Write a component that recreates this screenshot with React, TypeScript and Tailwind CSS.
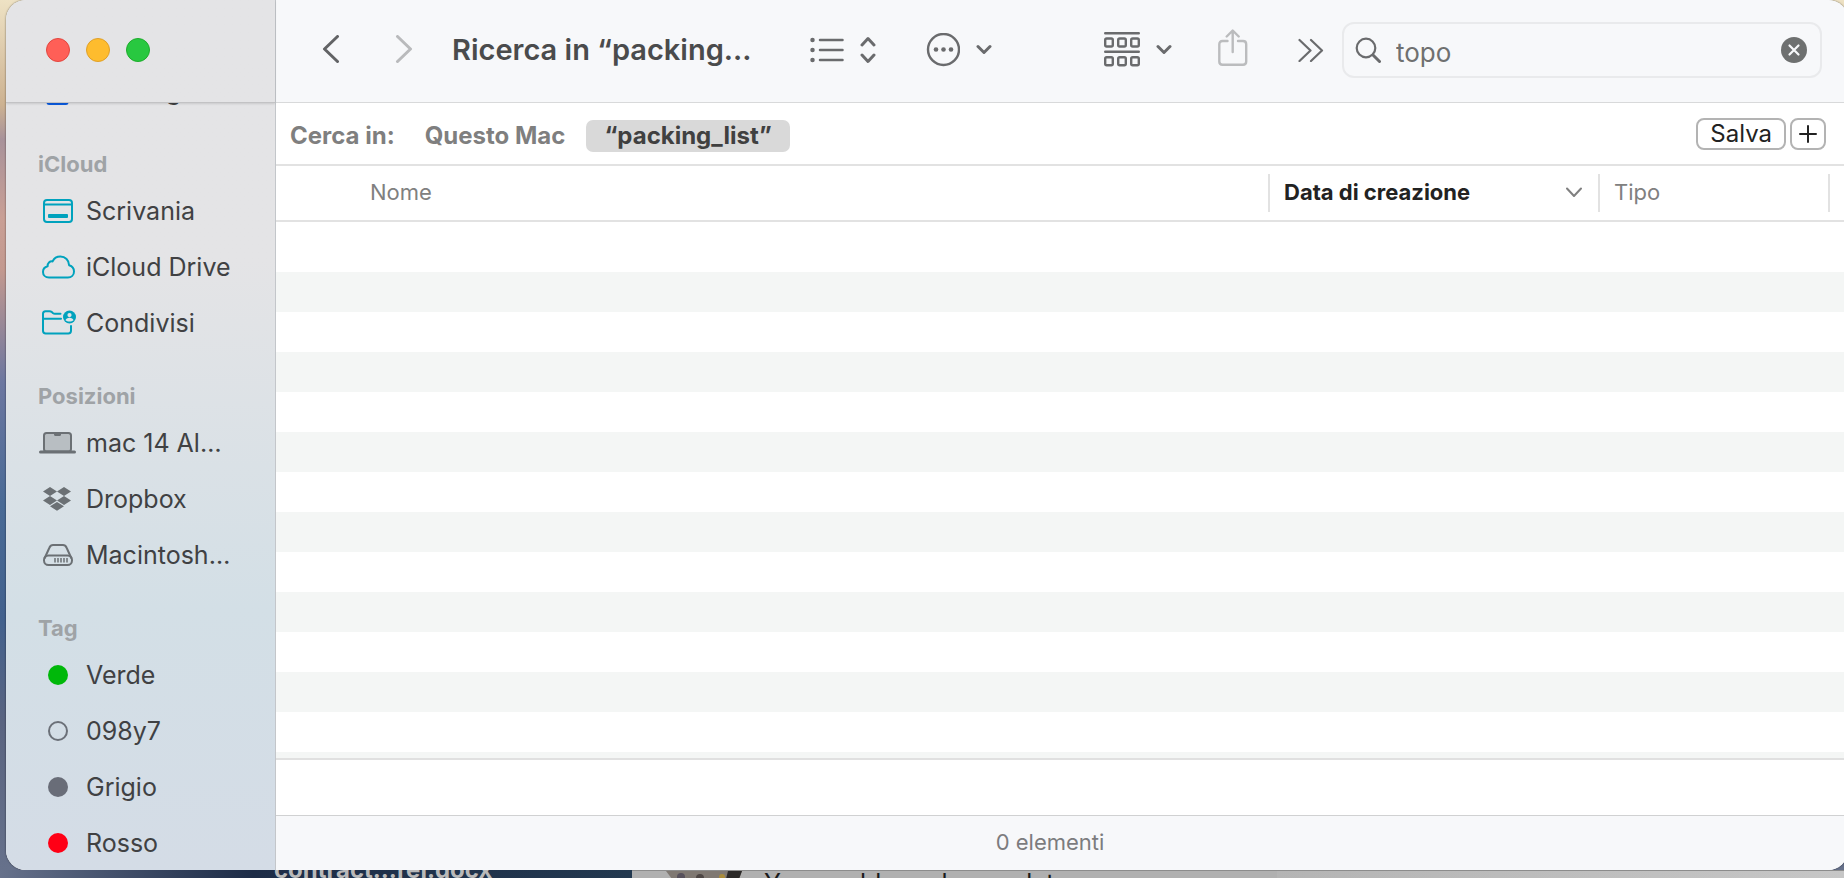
import type { ReactNode } from "react";

const DesktopIcon = () => (
  <svg width="30" height="24" viewBox="0 0 30 24" fill="none" stroke="#00a2bd" strokeWidth="2">
    <rect x="1" y="1" width="28" height="22" rx="3" />
    <path d="M1 5.500h28" />
    <rect x="5" y="15" width="20" height="4" rx="1" fill="#00a2bd" stroke="none" />
  </svg>
);

const CloudIcon = () => (
  <svg width="34" height="24" viewBox="0 0 34 24" fill="none" stroke="#00a2bd" strokeWidth="2" strokeLinejoin="round">
    <path d="M8 22.500C4.300 22.500 2 20 2 17c0-3 2-5.200 4.600-5.800C6.400 8.200 8.800 6 11.600 6.400 13 3.300 16 1.500 19.400 1.500c4.900 0 8.600 3.800 8.700 8.700 3 .9 4.900 3.200 4.900 6.200 0 3.500-2.600 6.100-6.100 6.100H8z" />
  </svg>
);

const SharedIcon = () => (
  <svg width="36" height="26" viewBox="0 0 36 26" fill="none" stroke="#00a2bd" strokeWidth="2" strokeLinecap="round" strokeLinejoin="round">
    <path d="M20.500 3.800h-5.500c-1 0-1.500-.3-2.200-.9l-1-.9c-.7-.6-1.300-.8-2.300-.8H5.500C3.800 1.200 3 2.200 3 3.800v17C3 22.500 4 23.500 5.700 23.500h22.600c1.700 0 2.700-1 2.700-2.700V16" />
    <path d="M3 8.800h18" />
    <circle cx="29.500" cy="7" r="6.500" fill="#00a2bd" stroke="none" />
    <circle cx="29.500" cy="5.100" r="2.100" fill="#e2e4e6" stroke="none" />
    <path d="M25.500 10.300c.4-1.800 2-2.600 4-2.600s3.600.8 4 2.600c-1 .8-2.400 1.200-4 1.200s-3-.4-4-1.200z" fill="#e2e4e6" stroke="none" />
  </svg>
);

const LaptopIcon = () => (
  <svg width="38" height="22" viewBox="0 0 38 22">
    <rect x="5" y="1" width="27" height="18.500" rx="2.500" fill="#b8bec2" stroke="#6b7074" strokeWidth="2" />
    <path d="M15 1h7v1.500c0 .8-.5 1.500-1.500 1.500h-4C15.500 4 15 3.300 15 2.500z" fill="#6b7074" />
    <rect x="0" y="18.500" width="37" height="3" rx="1.500" fill="#6b7074" />
  </svg>
);

const DropboxIcon = () => (
  <svg width="30" height="24" viewBox="0 0 30 24" fill="#6b7074">
    <path d="M7 0l7 4.500L7 9 0 4.500zM21 0l7 4.500L21 9l-7-4.500zM7 9l7 4.500L7 18l-7-4.500zM21 9l7 4.500-7 4.500-7-4.500zM14 15l7 4.300-7 4.500-7-4.500z" />
  </svg>
);

const DriveIcon = () => (
  <svg width="30" height="22" viewBox="0 0 30 22" fill="none" stroke="#6b7074" strokeWidth="2">
    <rect x="1" y="11.500" width="28" height="9.500" rx="4.500" />
    <path d="M1.500 14.500L6.500 3.500C7.200 1.800 8.200 1 10 1h10c1.800 0 2.800.8 3.500 2.500l5 11" />
    <path d="M12 14v4.500M15 14v4.500M18 14v4.500M21 14v4.500M24 14v4.500" strokeWidth="1.500" />
  </svg>
);

const CalendarIcon = () => (
  <svg width="24" height="28" viewBox="0 0 24 28" fill="none" stroke="#0a5be0" strokeWidth="3">
    <rect x="2" y="1.500" width="19" height="25" rx="1" />
  </svg>
);

const Dot = ({ className }: { className: string }) => <span className={`size-5 rounded-full ${className}`} />;

const ChevronDown = () => (
  <svg width="16" height="12" viewBox="0 0 16 12" fill="none" stroke="#6a6b6d" strokeWidth="3" strokeLinecap="round" strokeLinejoin="round">
    <path d="M2 2.500l6 6 6-6" />
  </svg>
);

const sections: { title: string; items: { label: string; icon: ReactNode }[] }[] = [
  {
    title: "iCloud",
    items: [
      { label: "Scrivania", icon: <DesktopIcon /> },
      { label: "iCloud Drive", icon: <CloudIcon /> },
      { label: "Condivisi", icon: <SharedIcon /> },
    ],
  },
  {
    title: "Posizioni",
    items: [
      { label: "mac 14 Al…", icon: <LaptopIcon /> },
      { label: "Dropbox", icon: <DropboxIcon /> },
      { label: "Macintosh…", icon: <DriveIcon /> },
    ],
  },
  {
    title: "Tag",
    items: [
      { label: "Verde", icon: <Dot className="bg-[#00b80a]" /> },
      { label: "098y7", icon: <Dot className="border-2 border-[#6b7078]" /> },
      { label: "Grigio", icon: <Dot className="bg-[#696d78]" /> },
      { label: "Rosso", icon: <Dot className="bg-[#ff0015]" /> },
    ],
  },
];

function SidebarItem({ label, icon }: { label: string; icon: ReactNode }) {
  return (
    <a href="#" className="flex h-14 items-center gap-1.5 pl-[30px] text-[25px] text-[#404143]">
      <span className="flex w-11 shrink-0 justify-center">{icon}</span>
      <span className="pt-0.5 whitespace-nowrap">{label}</span>
    </a>
  );
}

function Sidebar() {
  return (
    <aside className="flex w-[270px] shrink-0 flex-col border-r border-[#c3c6ca] bg-linear-to-b from-[#e4e4e6] from-30% via-[#d3dfe6] via-70% to-[#d4dce6]">
      <div className="z-10 flex h-[103px] shrink-0 items-center gap-4 border-b border-[#c2c2c4] pb-0.5 pl-10 shadow-[0_1px_2px_rgba(0,0,0,0.12)]">
        <button aria-label="Chiudi" className="size-6 rounded-full border border-[#e2463f] bg-[#ff5f57]" />
        <button aria-label="Riduci" className="size-6 rounded-full border border-[#e0a028] bg-[#febc2e]" />
        <button aria-label="Ingrandisci" className="size-6 rounded-full border border-[#1dad2b] bg-[#28c840]" />
      </div>
      <nav className="min-h-0 flex-1 overflow-hidden">
        <div className="-mt-10">
          <SidebarItem label="Training" icon={<CalendarIcon />} />
        </div>
        {sections.map((section) => (
          <section key={section.title}>
            <h2 className="flex h-16 items-end pb-0.5 pl-8 text-[22px] font-bold text-[#9fa3a6]">{section.title}</h2>
            {section.items.map((item) => (
              <SidebarItem key={item.label} {...item} />
            ))}
          </section>
        ))}
      </nav>
    </aside>
  );
}

function Toolbar() {
  return (
    <header className="flex h-[103px] shrink-0 items-center border-b border-[#d8d9da] bg-[#f7f8fa] pr-[26px] pb-0.5 pl-[45px]">
      <button aria-label="Indietro">
        <svg width="20" height="30" viewBox="0 0 20 30" fill="none" stroke="#626365" strokeWidth="3" strokeLinecap="round" strokeLinejoin="round">
          <path d="M16.500 1.500L3.500 14l13 12.500" />
        </svg>
      </button>
      <button aria-label="Avanti" className="ml-[53px]">
        <svg width="20" height="30" viewBox="0 0 20 30" fill="none" stroke="#b9babc" strokeWidth="3" strokeLinecap="round" strokeLinejoin="round">
          <path d="M3.500 1.500l13 12.500-13 12.500" />
        </svg>
      </button>
      <h1 className="ml-[38px] w-[358px] shrink-0 text-[29px] font-semibold whitespace-nowrap text-[#4a4b4c]">
        Ricerca in “packing…
      </h1>
      <button aria-label="Vista" className="flex items-center gap-4">
        <svg width="34" height="26" viewBox="0 0 34 26" fill="none" stroke="#6a6b6d" strokeWidth="2.500" strokeLinecap="round">
          <path d="M10 3h22.500M10 13h22.500M10 23h22.500" />
          <path d="M2.500 3h.01M2.500 13h.01M2.500 23h.01" strokeWidth="4.500" />
        </svg>
        <svg width="16" height="28" viewBox="0 0 16 28" fill="none" stroke="#6a6b6d" strokeWidth="3" strokeLinecap="round" strokeLinejoin="round">
          <path d="M2 9l6-6.500L14 9M2 19l6 6.500 6-6.500" />
        </svg>
      </button>
      <button aria-label="Azioni" className="ml-[50px] flex items-center gap-4">
        <svg width="34" height="34" viewBox="0 0 34 34">
          <circle cx="17.500" cy="16.500" r="15.500" fill="none" stroke="#6a6b6d" strokeWidth="2.400" />
          <g fill="#6a6b6d">
            <circle cx="10" cy="16.500" r="2.300" />
            <circle cx="17.500" cy="16.500" r="2.300" />
            <circle cx="25" cy="16.500" r="2.300" />
          </g>
        </svg>
        <ChevronDown />
      </button>
      <button aria-label="Raggruppa" className="ml-28 flex items-center gap-4">
        <svg width="36" height="36" viewBox="0 0 36 36" fill="none" stroke="#6a6b6d" strokeWidth="2.400" strokeLinecap="round">
          <path d="M1.200 1.200h33.600M1.200 19.800h33.600" />
          <rect x="1.200" y="6.500" width="7.600" height="8" rx="1.500" />
          <rect x="14.200" y="6.500" width="7.600" height="8" rx="1.500" />
          <rect x="27.200" y="6.500" width="7.600" height="8" rx="1.500" />
          <rect x="1.200" y="25.300" width="7.600" height="8" rx="1.500" />
          <rect x="14.200" y="25.300" width="7.600" height="8" rx="1.500" />
          <rect x="27.200" y="25.300" width="7.600" height="8" rx="1.500" />
        </svg>
        <ChevronDown />
      </button>
      <button aria-label="Condividi" className="ml-[45px] pb-1">
        <svg width="32" height="38" viewBox="0 0 32 38" fill="none" stroke="#bbbcbe" strokeWidth="2.400" strokeLinecap="round" strokeLinejoin="round">
          <path d="M10.500 12H5.500c-2 0-3.200 1.200-3.200 3.200v17.400c0 2 1.200 3.200 3.200 3.200h20.500c2 0 3.200-1.200 3.200-3.200V15.200c0-2-1.200-3.200-3.200-3.200h-5" />
          <path d="M15.700 23V2M9.700 7.500l6-6 6 6" />
        </svg>
      </button>
      <button aria-label="Altro" className="ml-[49px]">
        <svg width="26" height="24" viewBox="0 0 26 24" fill="none" stroke="#6a6b6d" strokeWidth="2.200" strokeLinecap="round" strokeLinejoin="round">
          <path d="M1.500 2l11 10.500-11 10.500M13 2l11 10.500-11 10.500" />
        </svg>
      </button>
      <div className="ml-[18px] flex h-14 min-w-0 flex-1 items-center rounded-xl border-2 border-[#e9eaec] pr-[13px] pl-[11px]">
        <svg className="shrink-0" width="26" height="26" viewBox="0 0 26 26" fill="none" stroke="#6a6b6d" strokeLinecap="round">
          <circle cx="11" cy="11" r="9.300" strokeWidth="2.200" />
          <path d="M18 18l6.500 6.500" strokeWidth="3" />
        </svg>
        <input
          aria-label="Cerca"
          defaultValue="topo"
          className="ml-[15px] min-w-0 flex-1 bg-transparent pt-1 text-[26px] text-[#6f7070] outline-none"
        />
        <button aria-label="Cancella">
          <svg width="26" height="26" viewBox="0 0 26 26">
            <circle cx="13" cy="13" r="13" fill="#6e7070" />
            <path d="M8.500 8.500l9 9M17.500 8.500l-9 9" stroke="#f7f8fa" strokeWidth="2.200" strokeLinecap="round" />
          </svg>
        </button>
      </div>
    </header>
  );
}

function ScopeBar() {
  return (
    <div className="flex h-[63px] shrink-0 items-center border-b-2 border-[#e2e2e2] pr-[22px] pl-3.5 text-2xl text-[#7f7f7f]">
      <div className="flex items-center pt-1 font-bold">
        <span>Cerca in:</span>
        <button className="ml-[30px] font-bold">Questo Mac</button>
        <button className="ml-[21px] h-8 rounded-[7px] bg-[#d9d9d9] px-[18px] leading-8 font-bold text-[#404040]">
          “packing_list”
        </button>
      </div>
      <button className="ml-auto h-8 rounded-lg border-2 border-[#b3b3b3] px-3 leading-7 text-[#222222]">Salva</button>
      <button aria-label="Aggiungi criterio" className="ml-1 flex h-8 w-9 items-center justify-center rounded-lg border-2 border-[#b3b3b3]">
        <svg width="18" height="18" viewBox="0 0 18 18" stroke="#222222" strokeWidth="2" strokeLinecap="round">
          <path d="M9 1v16M1 9h16" />
        </svg>
      </button>
    </div>
  );
}

function FileList() {
  return (
    <div className="min-h-0 flex-1 overflow-hidden">
      <table className="w-full table-fixed border-collapse text-left text-[22px] text-[#808080]">
        <thead>
          <tr className="h-[55px] border-b-2 border-[#e2e2e2]">
            <th className="p-0 font-normal">
              <div className="flex h-[38px] items-center border-r-2 border-[#e2e2e2] pb-0.5 pl-[94px]">Nome</div>
            </th>
            <th className="w-[330px] p-0 font-bold text-[#222222]">
              <div className="flex h-[38px] items-center justify-between border-r-2 border-[#e2e2e2] pr-4 pb-0.5 pl-3.5">
                Data di creazione
                <svg width="16" height="10" viewBox="0 0 16 10" fill="none" stroke="#808080" strokeWidth="2" strokeLinecap="round" strokeLinejoin="round">
                  <path d="M1 1.500L8 9l7-7.500" />
                </svg>
              </div>
            </th>
            <th className="w-[230px] p-0 font-normal">
              <div className="flex h-[38px] items-center border-r-2 border-[#e2e2e2] pb-0.5 pl-3.5">Tipo</div>
            </th>
            <th className="w-[18px] p-0" />
          </tr>
        </thead>
        <tbody>
          {Array.from({ length: 30 }, (_, i) => (
            <tr key={i} className="h-10 first:h-[51px] even:bg-[#f4f6f5]">
              <td colSpan={4} className="p-0" />
            </tr>
          ))}
        </tbody>
      </table>
    </div>
  );
}

// Windows and wallpaper that peek out below the Finder window
function Backdrop() {
  return (
    <div className="flex h-2 shrink-0 overflow-hidden">
      <div className="flex w-[632px] shrink-0 items-end bg-linear-to-r from-[#66718b] via-[#1d2c47] via-40% to-[#22384f] pl-[274px]">
        <span className="text-2xl leading-4 font-bold whitespace-nowrap text-[#b9b9b9]">contract…rel.docx</span>
      </div>
      <div className="flex flex-1 items-start border-t border-[#8c8c8c] bg-[#b0b0b0]">
        <svg className="ml-[34px] shrink-0" width="76" height="8" viewBox="0 0 76 8">
          <path d="M0 0h76l-3 8H6z" fill="#7f7872" />
          <path d="M62 0h14l-3 8H60z" fill="#2b2928" />
          <circle cx="15" cy="6" r="4" fill="#57515c" />
          <circle cx="34" cy="7" r="4" fill="#4d4644" />
          <circle cx="56" cy="6" r="3" fill="#a98c3c" />
        </svg>
        <span className="ml-[22px] w-[513px] text-[25px] leading-6 whitespace-nowrap text-[#1b1b1b]">You could need some later</span>
        <span className="h-2 flex-1 bg-linear-to-r from-[#b4b4b4] to-[#c6c6c6]" />
      </div>
    </div>
  );
}

export default function App() {
  return (
    <div className="flex h-screen flex-col overflow-hidden font-['Inter',sans-serif]">
      <div className="flex min-h-0 flex-1 bg-[linear-gradient(#eee2c4,#cdb291_12%,#a8929a_16%,#c99f95_25%,#c3998f_31%,#6c77a0_44%,#496a95_58%,#42618d_71%,#5a6480_83%,#66718b)]">
        <div className="-mr-1 ml-1.5 flex min-w-0 flex-1 overflow-hidden rounded-[20px] bg-white shadow-[0_0_2px_rgba(0,0,0,0.6)]">
          <Sidebar />
          <main className="flex min-w-0 flex-1 flex-col">
            <Toolbar />
            <ScopeBar />
            <FileList />
            <div className="h-[57px] shrink-0 border-t-2 border-[#e0e0e0]" />
            <footer className="flex h-[55px] shrink-0 items-center justify-center border-t border-[#d0d1d2] bg-[#f7f8fa] pr-6 pb-0.5 text-[22px] text-[#7c7c7e]">
              0 elementi
            </footer>
          </main>
        </div>
      </div>
      <Backdrop />
    </div>
  );
}
